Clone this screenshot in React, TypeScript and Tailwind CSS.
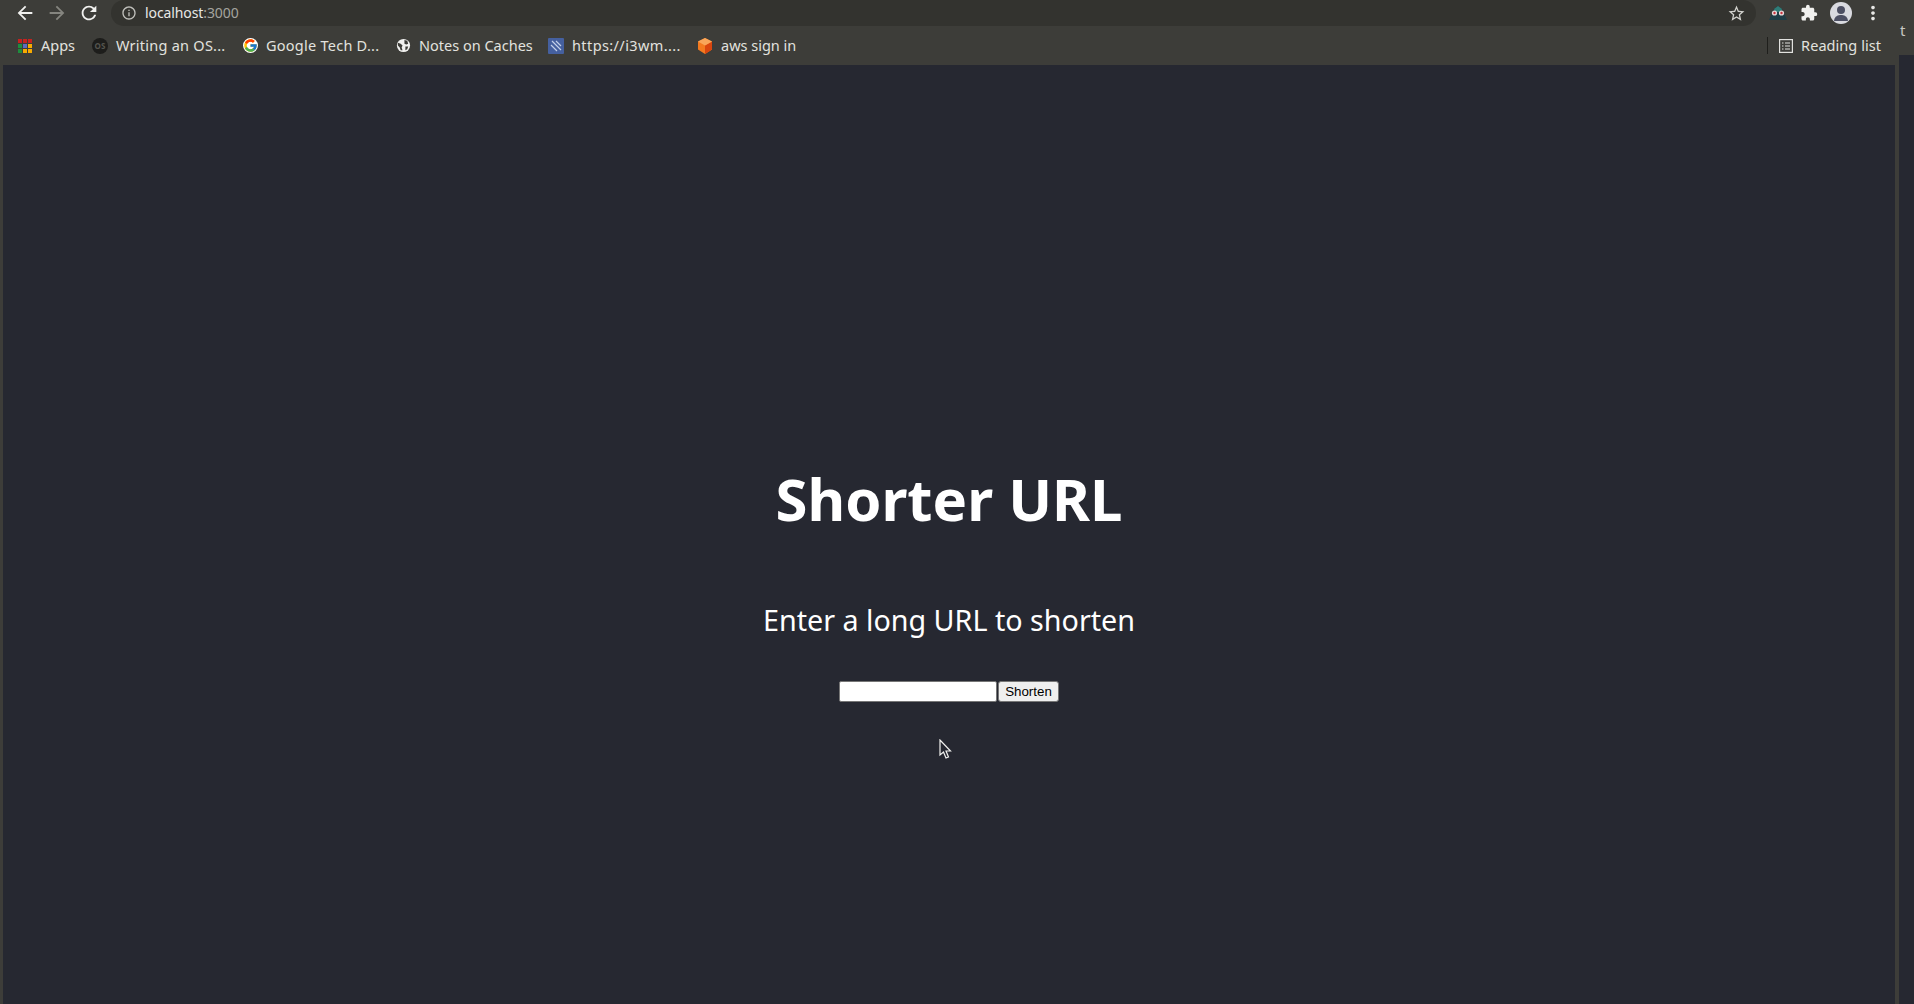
import { MdArrowBack, MdArrowForward, MdExtension, MdInfoOutline, MdMoreVert, MdRefresh, MdStarBorder } from 'react-icons/md';
import { FcGoogle } from 'react-icons/fc';

const appColors = ['#c5221f', '#c5221f', '#c5221f', '#1e8e3e', '#5c6bc0', '#f9ab00', '#1e8e3e', '#f9ab00', '#f9ab00'];

function AppsIcon() {
  return (
    <div className="grid grid-cols-3 gap-[1px] w-[14px] h-[14px]">
      {appColors.map((c, i) => (
        <div key={i} className="w-[4px] h-[4px]" style={{ backgroundColor: c }} />
      ))}
    </div>
  );
}

function Bookmark({ icon, label, className }: { icon: React.ReactNode; label: string; className: string }) {
  return (
    <div className={`flex items-center gap-[8px] shrink-0 ${className}`}>
      <div className="w-[16px] h-[16px] flex items-center justify-center">{icon}</div>
      <span className="text-[14.5px] leading-none text-[#e2e2df] whitespace-nowrap">{label}</span>
    </div>
  );
}

function OsIcon() {
  return (
    <div className="w-[16px] h-[16px] rounded-full bg-[#1d1d1b] flex items-center justify-center text-[8px] font-bold text-[#55554f]">
      OS
    </div>
  );
}

function GlobeIcon() {
  return (
    <svg viewBox="0 0 16 16" className="w-[15px] h-[15px]">
      <circle cx="8" cy="8" r="7" fill="#f1f1ef" />
      <path d="M2 5l3 1 2 2-1 2 1 3-2 0-1-3-2-2zM9 2l3 1 1 3-2 1-2-1zM10 9l3 0-1 3-2 1z" fill="#3c3c37" />
    </svg>
  );
}

function I3Icon() {
  return (
    <svg viewBox="0 0 16 16" className="w-[16px] h-[16px]">
      <rect width="16" height="16" rx="1" fill="#45609f" />
      <path d="M4 3l9 9M8 3l5 5M3 7l6 6" stroke="#c2cfe9" strokeWidth="1.2" />
    </svg>
  );
}

function AwsIcon() {
  return (
    <svg viewBox="0 0 16 16" className="w-[16px] h-[16px]">
      <path d="M8 0l7 3.5v8L8 16l-7-4.5v-8z" fill="#f47a1f" />
      <path d="M8 7.5V16l7-4.5v-8z" fill="#d9460f" />
      <path d="M8 0l7 3.5L8 7.5 1 3.5z" fill="#f9a65a" />
    </svg>
  );
}

function ReadingIcon() {
  return (
    <svg viewBox="0 0 14 14" className="w-[14px] h-[14px]" fill="none" stroke="#e2e2df" strokeWidth="1.2">
      <rect x="0.6" y="0.6" width="12.8" height="12.8" />
      <path d="M3 4h1.5M6 4h5M3 7h1.5M6 7h5M3 10h1.5M6 10h5" />
    </svg>
  );
}

function ProfileIcon() {
  return (
    <div className="w-[22px] h-[22px] rounded-full bg-[#d9dae0] overflow-hidden relative">
      <div className="absolute left-[7px] top-[4px] w-[8px] h-[8px] rounded-full bg-[#4c4f63]" />
      <div className="absolute left-[4px] top-[13px] w-[14px] h-[6px] rounded-t-full bg-[#4c4f63]" />
    </div>
  );
}

function MaskIcon() {
  return (
    <svg viewBox="0 0 18 16" className="w-[18px] h-[16px]">
      <path d="M0 15L5 4l4-3 4 3 5 11z" fill="#1f3d46" />
      <path d="M5 4l4-3 4 3-1 3H6z" fill="#2f7d78" />
      <circle cx="5.5" cy="8" r="2.6" fill="#e8d9d9" />
      <circle cx="12.5" cy="8" r="2.6" fill="#e8d9d9" />
      <circle cx="5.5" cy="8" r="1.2" fill="#c8323c" />
      <circle cx="12.5" cy="8" r="1.2" fill="#c8323c" />
    </svg>
  );
}

export default function App() {
  return (
    <div className="flex w-full h-[1004px] overflow-hidden bg-[#3d3d39] font-['Noto_Sans',sans-serif]">
      <div className="relative flex flex-col w-[1899px] shrink-0">
        {/* Toolbar */}
        <div className="flex items-center h-[26px] shrink-0">
          <div className="flex items-center w-[111px] shrink-0 pl-[14px] gap-[10px]">
            <MdArrowBack className="text-[22px] text-[#f1f1ef] shrink-0" />
            <MdArrowForward className="text-[22px] text-[#85857f] shrink-0" />
            <MdRefresh className="text-[22px] text-[#f1f1ef] shrink-0" />
          </div>
          <div className="flex items-center w-[1645px] h-[26px] shrink-0 rounded-[14px] bg-[#33332f] pl-[10px] pr-[10px]">
            <MdInfoOutline className="text-[16px] text-[#c0c0bc] shrink-0" />
            <span className="ml-[8px] text-[14px] tracking-[-0.1px] leading-none text-[#e8e8e6]">
              localhost<span className="text-[#a4a49f]">:3000</span>
            </span>
            <MdStarBorder className="ml-auto text-[19px] text-[#d2d2ce]" />
          </div>
          <div className="flex items-center flex-1 pl-[13px]">
            <MaskIcon />
            <MdExtension className="ml-[13px] text-[18px] text-[#f1f1ef]" />
            <div className="ml-[12px]">
              <ProfileIcon />
            </div>
            <MdMoreVert className="ml-[10px] text-[22px] text-[#e8e8e6]" />
          </div>
        </div>

        {/* Bookmarks bar */}
        <div className="flex items-center h-[39px] shrink-0 pl-[17px] pr-[18px]">
          <Bookmark icon={<AppsIcon />} label="Apps" className="w-[75px]" />
          <Bookmark icon={<OsIcon />} label="Writing an OS..." className="w-[150px] tracking-[0.25px]" />
          <Bookmark icon={<FcGoogle className="text-[15px] bg-white rounded-full" />} label="Google Tech D..." className="w-[153px] tracking-[0.25px]" />
          <Bookmark icon={<GlobeIcon />} label="Notes on Caches" className="w-[153px]" />
          <Bookmark icon={<I3Icon />} label="https://i3wm...." className="w-[149px] tracking-[0.4px]" />
          <Bookmark icon={<AwsIcon />} label="aws sign in" className="w-[120px]" />
          <div className="ml-auto flex items-center">
            <div className="w-px h-[17px] bg-[#1f1f1c] mr-[11px]" />
            <ReadingIcon />
            <span className="ml-[8px] text-[14.5px] tracking-[0.05px] leading-none text-[#e2e2df]">Reading list</span>
          </div>
        </div>

        {/* Page */}
        <main className="flex-1 flex flex-col items-center ml-[3px] mr-[4px] bg-[#262831] pt-[397px]">
          <h1 className="text-[58px] leading-[74px] font-bold text-white">Shorter URL</h1>
          <p className="mt-[64px] text-[28.7px] leading-[40px] text-white">Enter a long URL to shorten</p>
          <form className="mt-[41px] flex items-center font-['Liberation_Sans',sans-serif]">
            <input type="text" className="w-[158px] h-[21px] bg-white border border-[#767676] rounded-[2px] outline-none" />
            <button type="button" className="w-[61px] h-[21px] ml-px bg-[#efefef] border border-[#767676] rounded-[3px] text-[13.33px] leading-none text-black">
              Shorten
            </button>
          </form>
        </main>

        {/* Mouse cursor */}
        <svg viewBox="0 0 13 20" className="absolute left-[939px] top-[739px] w-[13px] h-[20px]">
          <path d="M1 1v15l3.5-3 2.5 6 2.5-1-2.5-6h4.5z" fill="#262831" stroke="#f1f1ef" strokeWidth="1.2" />
        </svg>
      </div>

      {/* Sliver of the window behind */}
      <div className="flex-1 flex flex-col">
        <div className="h-[55px] pl-[1px] pt-[21px] text-[15px] leading-[18px] text-[#c8c8c4]">t</div>
        <div className="flex-1 bg-[#262831]" />
      </div>
    </div>
  );
}
